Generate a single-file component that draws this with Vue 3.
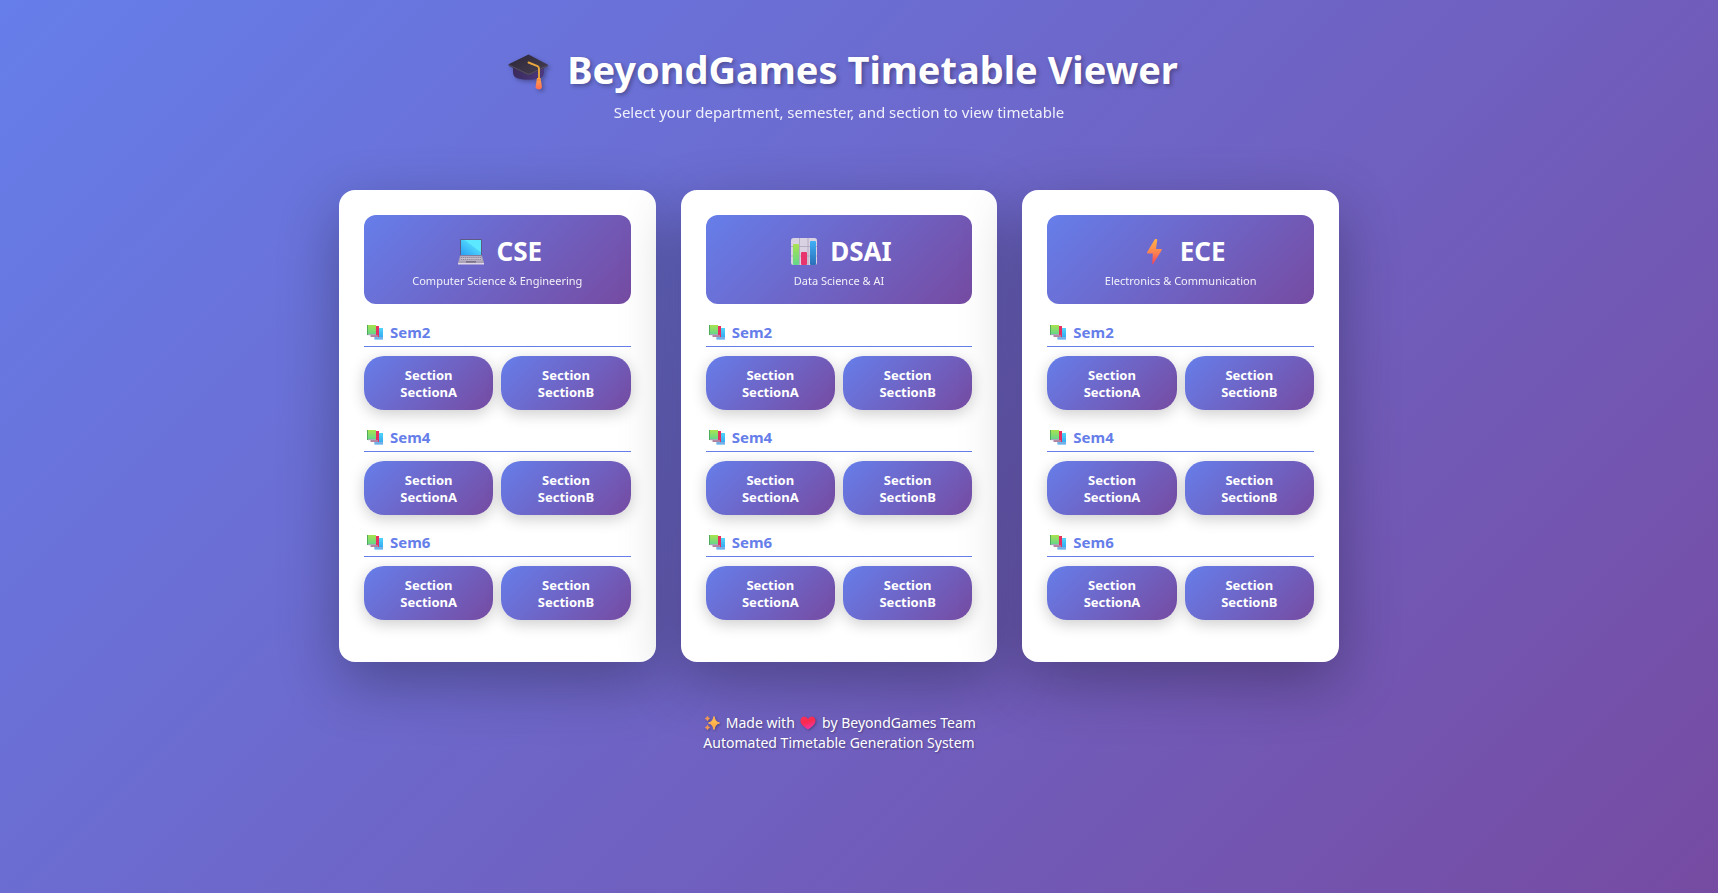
<script setup>
const semesters = ['Sem2', 'Sem4', 'Sem6']
const sections = ['SectionA', 'SectionB']
const departments = [
  { code: 'CSE', name: 'Computer Science & Engineering' },
  { code: 'DSAI', name: 'Data Science & AI' },
  { code: 'ECE', name: 'Electronics & Communication' },
]
</script>

<template>
  <svg class="defs" width="0" height="0" aria-hidden="true">
    <defs>
      <linearGradient id="capTop" x1="0" y1="0" x2="1" y2="1">
        <stop offset="0" stop-color="#2d2638" /><stop offset="1" stop-color="#463e52" />
      </linearGradient>
      <linearGradient id="capBase" x1="0" y1="0" x2="1" y2="0">
        <stop offset="0" stop-color="#3a2a5c" /><stop offset="1" stop-color="#4d3880" />
      </linearGradient>
      <linearGradient id="tassel" x1="0" y1="0" x2="0" y2="1">
        <stop offset="0" stop-color="#ffa64a" /><stop offset="1" stop-color="#ff6a55" />
      </linearGradient>
      <linearGradient id="screen" x1="1" y1="0" x2="0" y2="1">
        <stop offset="0.4" stop-color="#5ce8ff" /><stop offset="0.42" stop-color="#4cd2fb" /><stop offset="1" stop-color="#2a9df4" />
      </linearGradient>
      <linearGradient id="green" x1="0" y1="0" x2="0" y2="1">
        <stop offset="0" stop-color="#a9e34f" /><stop offset="1" stop-color="#62d68c" />
      </linearGradient>
      <linearGradient id="blue" x1="0" y1="0" x2="0" y2="1">
        <stop offset="0" stop-color="#3fb0f7" /><stop offset="1" stop-color="#2b6fb8" />
      </linearGradient>
      <linearGradient id="cyan" x1="0" y1="0" x2="0" y2="1">
        <stop offset="0" stop-color="#4fd6fa" /><stop offset="1" stop-color="#2f9ff0" />
      </linearGradient>
      <linearGradient id="bolt" x1="0" y1="0" x2="0" y2="1">
        <stop offset="0" stop-color="#ffb545" /><stop offset="0.55" stop-color="#fd8050" /><stop offset="1" stop-color="#f1405c" />
      </linearGradient>
      <linearGradient id="heart" x1="0" y1="0" x2="0.4" y2="1">
        <stop offset="0" stop-color="#f8315f" /><stop offset="0.5" stop-color="#fa2a4c" /><stop offset="1" stop-color="#f035a0" />
      </linearGradient>
      <linearGradient id="spark" x1="0" y1="0" x2="0" y2="1">
        <stop offset="0" stop-color="#ffcf5a" /><stop offset="1" stop-color="#ff9a3e" />
      </linearGradient>
    </defs>
  </svg>

  <main class="page">
    <header class="hero">
      <h1 class="hero-title">
        <svg class="hero-icon" viewBox="0 0 41 38" aria-hidden="true">
          <path d="M5 14 36 14 36 20Q36 25 31 26.500Q20 29 10 26.500Q4.500 25 5 19Z" fill="url(#capBase)" />
          <path d="M20.500 2.500 39.500 12.500Q40.500 13.500 39.500 14.500L22 23Q20.500 23.500 19.500 23L1 14Q0 13 1 12Z" fill="url(#capTop)" />
          <path d="M1 13 19.500 22Q20.500 22.500 22 22L39.500 13.500" fill="none" stroke="#5e5570" stroke-width="0.8" />
          <path d="M20.500 10.500 29.500 14Q31 15 31 17V28" fill="none" stroke="#e8a63c" stroke-width="1.900" stroke-linecap="round" />
          <path d="M29 26H32.500L34 35Q33.500 37.500 31 37.500Q28.500 37.500 27.500 35.500Z" fill="url(#tassel)" />
          <path d="M29 28H33" stroke="#e8823d" stroke-width="1" />
        </svg>
        <span>BeyondGames Timetable Viewer</span>
      </h1>
      <p class="hero-text">Select your department, semester, and section to view timetable</p>
    </header>

    <div class="cards">
      <article v-for="dept in departments" :key="dept.code" class="card">
        <header class="card-head">
          <h2 class="card-title">
            <svg v-if="dept.code === 'CSE'" class="card-icon" viewBox="0 0 28 28" aria-hidden="true">
              <rect x="3" y="1" width="22" height="17" rx="1" fill="#5d5a86" />
              <rect x="4" y="2" width="20" height="15" fill="url(#screen)" />
              <path d="M3 17.500H25L27 25H1Z" fill="#a9a1b5" />
              <path d="M4 18.500H24L25 22.500H3Z" fill="#c5bccd" />
              <path d="M4 19.500H24M4 21.500H24" stroke="#8b8497" stroke-width="0.900" stroke-dasharray="1.300 0.600" />
              <rect x="9" y="23" width="10" height="1.700" fill="#7c7589" />
              <path d="M1 25H27V26.500H1Z" fill="#e0d6e8" />
            </svg>
            <svg v-else-if="dept.code === 'DSAI'" class="card-icon" viewBox="0 0 28 28" aria-hidden="true">
              <rect x="1" y="0" width="26" height="27" rx="2.500" fill="#d9d2e2" />
              <path d="M9.500 0V27M18 0V27M1 8.500H27M1 18H27" stroke="#b1a8bd" stroke-width="0.900" />
              <rect x="3" y="6" width="6" height="21" rx="1" fill="url(#green)" />
              <rect x="11" y="14" width="6" height="13" rx="1" fill="#e8356d" />
              <rect x="20" y="3" width="6" height="24" rx="1" fill="url(#blue)" />
            </svg>
            <svg v-else class="card-icon" viewBox="0 0 28 28" aria-hidden="true">
              <path d="M15.500 1H16.500Q17.300 1 17.200 2L16 11H21Q22.300 11.200 21.700 12.200L13.300 25.800Q12.200 27 12.200 25.500L12.800 15.500H7.800Q6.700 15.300 7.100 14.300L14.500 1.800Q14.900 1 15.500 1Z" fill="url(#bolt)" />
            </svg>
            <span>{{ dept.code }}</span>
          </h2>
          <p class="card-text">{{ dept.name }}</p>
        </header>

        <section v-for="sem in semesters" :key="sem" class="semester">
          <h3 class="semester-title">
            <svg class="semester-icon" viewBox="0 0 16 15" aria-hidden="true">
              <rect x="7.500" y="3" width="8.500" height="11.500" fill="url(#cyan)" />
              <path d="M7.500 12.500H16V13.500H7.500Z" fill="#b7b9da" />
              <rect x="4" y="1" width="8" height="11" fill="#e5305f" />
              <path d="M3.500 10H11V12H3.500Z" fill="#b2829e" />
              <rect x="0" y="0" width="9" height="9.500" fill="url(#green)" />
              <rect x="0" y="0" width="1" height="10" fill="#4dab5a" />
              <path d="M1 9H9V10.200H1Z" fill="#a9a9bd" />
            </svg>
            <span>{{ sem }}</span>
          </h3>
          <div class="sections">
            <button v-for="name in sections" :key="name" type="button" class="section-button">Section {{ name }}</button>
          </div>
        </section>
      </article>
    </div>

    <footer class="footer">
      <p>
        <svg class="footer-icon" viewBox="0 0 16 16" aria-hidden="true">
          <path d="M10 1.500Q11 7 15.500 8Q11 9 10 14.500Q9 9 4.500 8Q9 7 10 1.500Z" fill="url(#spark)" stroke="#ffb44d" stroke-width="1" stroke-linejoin="round" />
          <path d="M3.500 1Q4 3 6 3.500Q4 4 3.500 6Q3 4 1 3.500Q3 3 3.500 1ZM3.500 10Q4 12 6 12.500Q4 13 3.500 15Q3 13 1 12.500Q3 12 3.500 10Z" fill="#f29a55" stroke="#f29a55" stroke-width="0.500" />
        </svg>
        Made with
        <svg class="footer-icon" viewBox="0 0 16 16" aria-hidden="true">
          <path d="M8 4Q6.500 1.500 4 1.500Q0.500 2 0.500 6Q0.500 10 8 14.500Q15.500 10 15.500 6Q15.500 2 12 1.500Q9.500 1.500 8 4Z" fill="url(#heart)" />
        </svg>
        by BeyondGames Team
      </p>
      <p>Automated Timetable Generation System</p>
    </footer>
  </main>
</template>

<style>
body {
  margin: 0;
}
</style>

<style scoped>
.defs {
  position: absolute;
}

.page {
  box-sizing: border-box;
  min-height: 100vh;
  padding: 39px 60px 40px 20px;
  background: linear-gradient(135deg, #667eea 0%, #764ba2 100%);
  font-family: "Segoe UI", "Noto Sans", "Open Sans", sans-serif;
  color: #fff;
}

h1,
h2,
h3,
p {
  margin: 0;
}

.hero {
  text-align: center;
  margin-bottom: 65px;
}

.hero-title {
  display: flex;
  align-items: center;
  justify-content: center;
  gap: 18px;
  padding-left: 8px;
  font-size: 38px;
  line-height: 60px;
  text-shadow: 2px 2px 4px rgba(0, 0, 0, 0.3);
}

.hero-icon {
  width: 41px;
  height: 38px;
  margin-top: 3px;
  filter: drop-shadow(2px 2px 2px rgba(0, 0, 0, 0.3));
}

.hero-text {
  font-size: 15px;
  line-height: 26px;
  opacity: 0.9;
}

.cards {
  display: grid;
  grid-template-columns: repeat(auto-fit, minmax(280px, 1fr));
  gap: 25px;
  max-width: 1000px;
  margin: 0 auto;
}

.card {
  padding: 25px;
  border-radius: 16px;
  background: #fff;
  box-shadow: 0 20px 60px rgba(0, 0, 0, 0.3);
}

.card-head {
  padding: 18px 18px 15px;
  margin-bottom: 18px;
  border-radius: 12px;
  background: linear-gradient(135deg, #667eea 0%, #764ba2 100%);
  text-align: center;
}

.card-title {
  display: flex;
  align-items: center;
  justify-content: center;
  gap: 12px;
  margin-bottom: 3px;
  padding-left: 4px;
  font-size: 26px;
  line-height: 37px;
}

.card-icon {
  width: 28px;
  height: 28px;
}

.card-text {
  font-size: 11px;
  line-height: 16px;
  opacity: 0.9;
}

.semester {
  margin-bottom: 17px;
}

.semester-title {
  display: flex;
  align-items: center;
  gap: 7px;
  margin-bottom: 9px;
  padding: 0 0 4px 3px;
  border-bottom: 1px solid #667eea;
  color: #667eea;
  font-size: 15px;
  line-height: 20px;
}

.semester-icon {
  width: 16px;
  height: 15px;
}

.sections {
  display: grid;
  grid-template-columns: 1fr 1fr;
  gap: 8px;
}

.section-button {
  padding: 11px 18px 9px;
  border: 0;
  border-radius: 20px;
  background: linear-gradient(135deg, #667eea 0%, #764ba2 100%);
  box-shadow: 0 4px 15px rgba(0, 0, 0, 0.2);
  color: #fff;
  font-family: inherit;
  font-size: 13px;
  font-weight: 700;
  line-height: 17px;
  cursor: pointer;
}

.footer {
  margin-top: 51px;
  font-size: 14px;
  line-height: 20px;
  text-align: center;
  text-shadow: 1px 1px 2px rgba(0, 0, 0, 0.3);
}

.footer-icon {
  width: 16px;
  height: 16px;
  margin: 0 2px;
  vertical-align: -3px;
  filter: drop-shadow(1px 1px 1px rgba(0, 0, 0, 0.3));
}
</style>
